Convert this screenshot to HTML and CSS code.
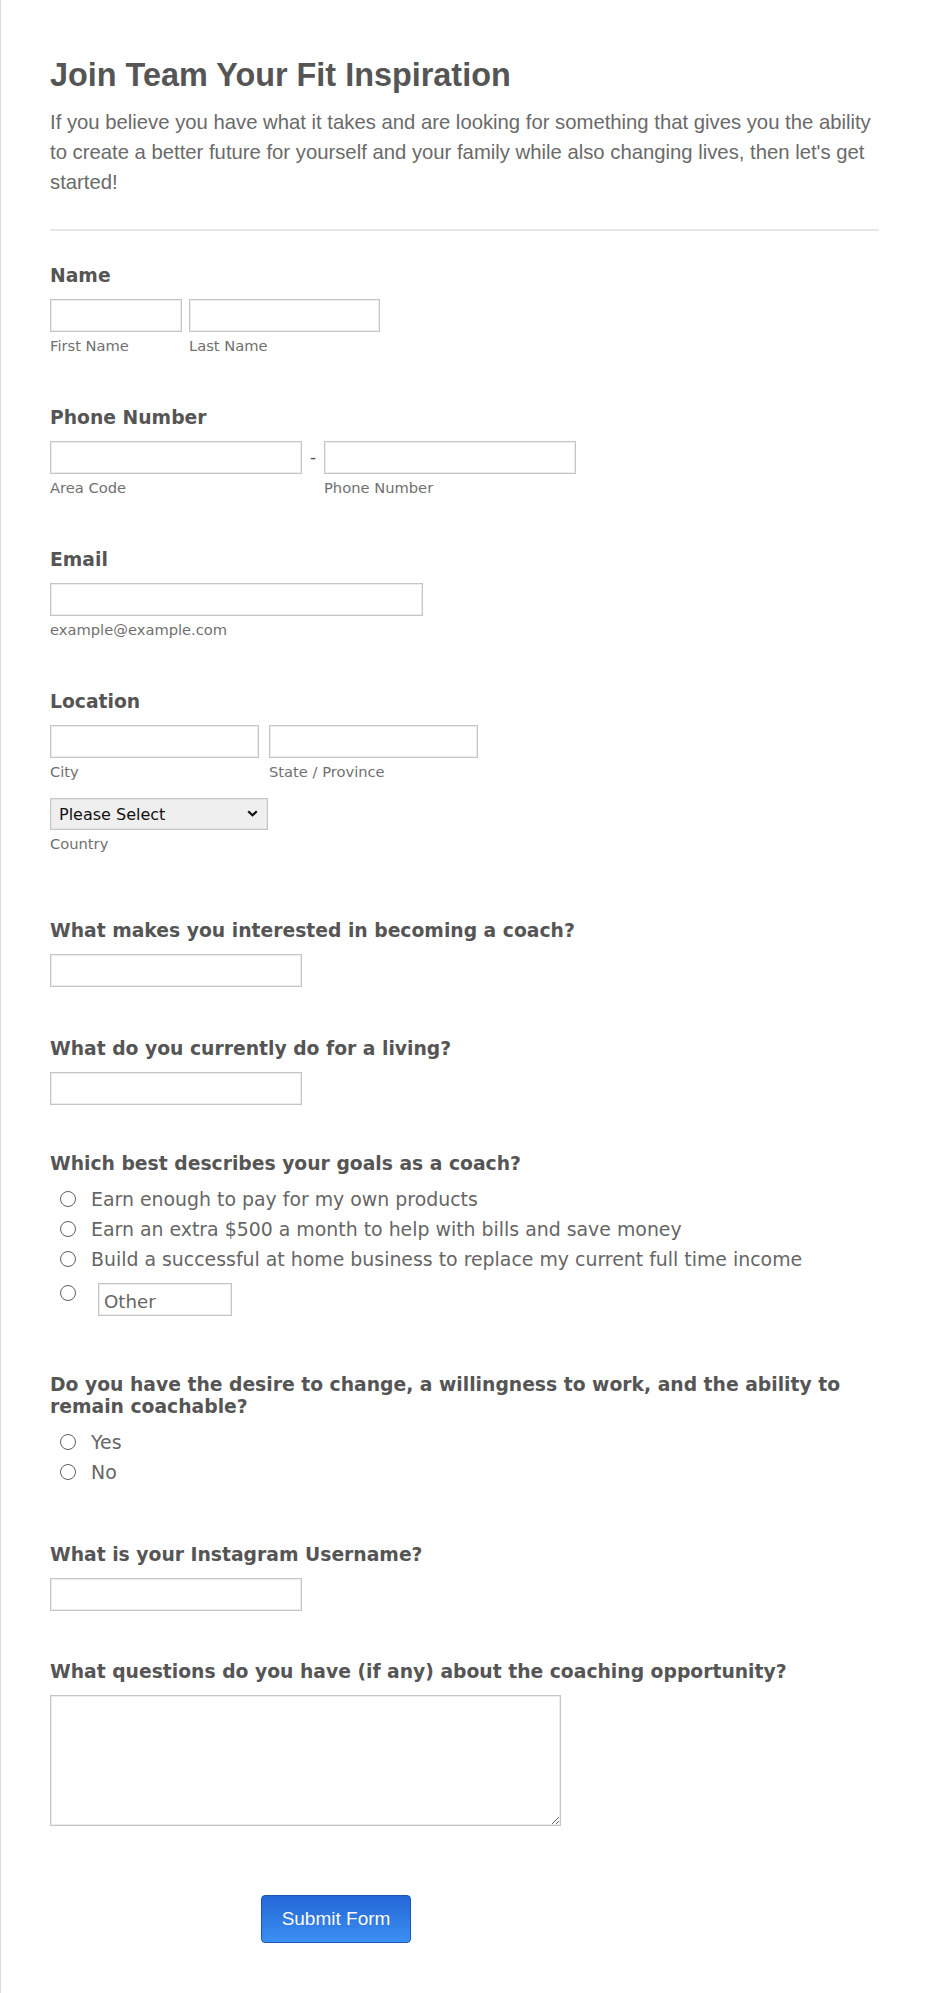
FILE: index.html
```html
<!DOCTYPE html>
<html lang="en">
<head>
<meta charset="utf-8">
<title>Join Team Your Fit Inspiration</title>
<link rel="stylesheet" href="styles.css">
</head>
<body>
<div class="page">
  <header class="form-header">
    <h1 class="title">Join Team Your Fit Inspiration</h1>
    <p class="desc">If you believe you have what it takes and are looking for something that gives you the ability to create a better future for yourself and your family while also changing lives, then let's get started!</p>
  </header>
  <hr class="sep">
  <form class="form">
    <div class="field">
      <div class="label">Name</div>
      <div class="row">
        <div class="sub-field"><input class="input w-first" type="text"><span class="sublabel">First Name</span></div>
        <div class="sub-field"><input class="input w-last" type="text"><span class="sublabel">Last Name</span></div>
      </div>
    </div>

    <div class="field">
      <div class="label">Phone Number</div>
      <div class="row row-tight">
        <div class="sub-field"><input class="input w-phone" type="text"><span class="sublabel">Area Code</span></div>
        <span class="dash">-</span>
        <div class="sub-field"><input class="input w-phone" type="text"><span class="sublabel">Phone Number</span></div>
      </div>
    </div>

    <div class="field">
      <div class="label">Email</div>
      <div class="sub-field"><input class="input w-email" type="text"><span class="sublabel">example@example.com</span></div>
    </div>

    <div class="field field-location">
      <div class="label">Location</div>
      <div class="row row-wide">
        <div class="sub-field"><input class="input w-city" type="text"><span class="sublabel">City</span></div>
        <div class="sub-field"><input class="input w-city" type="text"><span class="sublabel">State / Province</span></div>
      </div>
      <div class="sub-field select-field">
        <div class="select-wrap">
          <select class="select"><option>Please Select</option></select>
          <svg class="chevron" width="11" height="7" viewBox="0 0 11 7"><path d="M1.2 1.2 L5.5 5.3 L9.8 1.2" fill="none" stroke="#111" stroke-width="2.2"/></svg>
        </div>
        <span class="sublabel">Country</span>
      </div>
    </div>

    <div class="field field-short">
      <div class="label">What makes you interested in becoming a coach?</div>
      <input class="input w-phone" type="text">
    </div>

    <div class="field field-living">
      <div class="label">What do you currently do for a living?</div>
      <input class="input w-phone" type="text">
    </div>

    <div class="field field-radio">
      <div class="label">Which best describes your goals as a coach?</div>
      <div class="options">
        <label class="option"><input class="radio" type="radio" name="goal"><span>Earn enough to pay for my own products</span></label>
        <label class="option"><input class="radio" type="radio" name="goal"><span>Earn an extra $500 a month to help with bills and save money</span></label>
        <label class="option"><input class="radio" type="radio" name="goal"><span>Build a successful at home business to replace my current full time income</span></label>
        <div class="option option-other"><input class="radio" type="radio" name="goal"><input class="input w-other" type="text" placeholder="Other"></div>
      </div>
    </div>

    <div class="field field-radio2">
      <div class="label">Do you have the desire to change, a willingness to work, and the ability to remain coachable?</div>
      <div class="options">
        <label class="option"><input class="radio" type="radio" name="desire"><span>Yes</span></label>
        <label class="option"><input class="radio" type="radio" name="desire"><span>No</span></label>
      </div>
    </div>

    <div class="field field-insta">
      <div class="label">What is your Instagram Username?</div>
      <input class="input w-phone" type="text">
    </div>

    <div class="field field-last">
      <div class="label">What questions do you have (if any) about the coaching opportunity?</div>
      <textarea class="textarea"></textarea>
    </div>

    <div class="buttons">
      <button class="submit" type="button">Submit Form</button>
    </div>
  </form>
</div>
</body>
</html>
```

FILE: styles.css
```css
* { box-sizing: border-box; }

html, body {
  margin: 0;
  padding: 0;
  background: #ffffff;
}

.page {
  border-left: 1px solid #dcdcdc;
  padding: 55px 51px 50px 49px;
  min-height: 1993px;
}

.title {
  margin: 0;
  font-family: "Liberation Sans", Arial, sans-serif;
  font-weight: bold;
  font-size: 32.4px;
  line-height: 40px;
  color: #555555;
}

.desc {
  margin: 12px 0 0;
  font-family: "Liberation Sans", Arial, sans-serif;
  font-size: 20.3px;
  line-height: 30px;
  color: #6a6a6a;
}

.sep {
  margin: 32px 0 0;
  border: 0;
  border-top: 2px solid #e6e6e6;
  height: 0;
}

.form {
  padding-top: 34px;
  font-family: "DejaVu Sans", Verdana, sans-serif;
}

.field {
  margin-bottom: 52px;
}
.field-location { margin-bottom: 67px; }
.field-short { margin-bottom: 51px; }
.field-living { margin-bottom: 48px; }
.field-radio { margin-bottom: 58px; }
.field-radio2 { margin-bottom: 57px; }
.field-insta { margin-bottom: 50px; }
.field-last { margin-bottom: 69px; }

.label {
  font-weight: bold;
  font-size: 18.75px;
  line-height: 22px;
  color: #555555;
  margin-bottom: 12px;
}
.field-radio .label,
.field-radio2 .label {
  margin-bottom: 9px;
}

.row {
  display: flex;
  gap: 7px;
}
.row-tight { gap: 0; }
.row-wide { gap: 10px; }

.sub-field {
  display: flex;
  flex-direction: column;
  align-items: flex-start;
}

.sublabel {
  margin-top: 5px;
  font-size: 14.7px;
  line-height: 18px;
  color: #707070;
}

.input {
  display: block;
  height: 33px;
  border: 1px solid #c6c6c6;
  box-shadow: inset 0 0 0 1px #ececec;
  background: #fff;
  padding: 2px 6px;
  font-family: "DejaVu Sans", Verdana, sans-serif;
  font-size: 18.2px;
  color: #555;
  outline: none;
}
.input::placeholder { color: #666; }

.w-first { width: 132px; }
.w-last { width: 191px; }
.w-phone { width: 252px; }
.w-email { width: 373px; }
.w-city { width: 209px; }
.w-other { width: 134px; }

.dash {
  width: 22px;
  text-align: center;
  line-height: 33px;
  font-size: 17px;
  color: #555;
}

.select-field { margin-top: 17px; }

.select-wrap {
  position: relative;
  width: 218px;
  height: 32px;
}

.select {
  appearance: none;
  -webkit-appearance: none;
  width: 218px;
  height: 32px;
  border: 1px solid #c6c6c6;
  box-shadow: inset 0 0 0 1px #e4e4e4;
  background: #efefef;
  border-radius: 0;
  padding: 0 0 0 8px;
  font-family: "DejaVu Sans", Verdana, sans-serif;
  font-size: 16px;
  color: #111;
  outline: none;
}

.chevron {
  position: absolute;
  right: 10px;
  top: 12px;
  pointer-events: none;
}

.options {
  margin-top: 0;
  padding-left: 10px;
}

.option {
  display: flex;
  align-items: center;
  height: 30px;
  font-size: 18.9px;
  color: #666666;
}

.radio {
  appearance: none;
  -webkit-appearance: none;
  width: 16px;
  height: 16px;
  margin: 0 15px 0 0;
  border: 1px solid #5f5f5f;
  border-radius: 50%;
  background: #fff;
  flex: none;
}

.option-other {
  align-items: flex-start;
  height: auto;
  margin-top: 9px;
}
.option-other .radio {
  margin: 2px 22px 0 0;
}
.option-other .input {
  padding-left: 5px;
  padding-top: 5px;
}

.textarea {
  display: block;
  width: 511px;
  height: 131px;
  border: 1px solid #c6c6c6;
  box-shadow: inset 0 0 0 1px #ececec;
  resize: both;
  outline: none;
}

.buttons {
  padding-left: 211px;
}

.submit {
  width: 150px;
  height: 48px;
  border: 1px solid #1b55b8;
  border-radius: 4px;
  background: linear-gradient(#2467d6, #3b8ff2);
  color: #ffffff;
  font-family: "Liberation Sans", Arial, sans-serif;
  font-size: 19px;
  text-shadow: 0 0 1px rgba(0, 0, 0, 0.2);
  padding: 0;
  cursor: pointer;
}
```
